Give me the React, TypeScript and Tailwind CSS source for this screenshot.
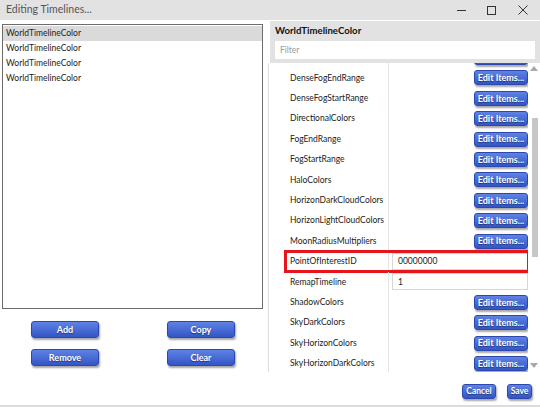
import React from 'react';

type Prop = { name: string; value?: string };

const props: Prop[] = [
  { name: 'DenseFogColors' },
  { name: 'DenseFogEndRange' },
  { name: 'DenseFogStartRange' },
  { name: 'DirectionalColors' },
  { name: 'FogEndRange' },
  { name: 'FogStartRange' },
  { name: 'HaloColors' },
  { name: 'HorizonDarkCloudColors' },
  { name: 'HorizonLightCloudColors' },
  { name: 'MoonRadiusMultipliers' },
  { name: 'PointOfInterestID', value: '00000000' },
  { name: 'RemapTimeline', value: '1' },
  { name: 'ShadowColors' },
  { name: 'SkyDarkColors' },
  { name: 'SkyHorizonColors' },
  { name: 'SkyHorizonDarkColors' },
  { name: 'SkyLightColors' },
];

const font = { fontFamily: 'Lato, "Noto Sans", sans-serif' };

function BlueButton({ children, className = '' }: { children: React.ReactNode; className?: string }) {
  return (
    <button
      className={`flex items-center justify-center whitespace-nowrap rounded-[3px] border border-[#2d48ac] bg-linear-to-b from-[#5f82e4] to-[#3455c6] font-bold text-white shadow-[1px_2px_2px_rgba(0,0,0,0.35)] [text-shadow:0_1px_1px_rgba(0,0,0,0.45)] ${className}`}
    >
      {children}
    </button>
  );
}

function PropRow({ prop }: { prop: Prop }) {
  const highlighted = prop.name === 'PointOfInterestID';
  return (
    <div className="relative flex h-[20.4px] shrink-0">
      <div className="flex w-[119px] items-center whitespace-nowrap pl-[21px] text-[8.5px] text-[#222]">{prop.name}</div>
      <div className="flex flex-1 items-center justify-end border-l border-[#e4e4e4] pl-[3px]">
        {prop.value !== undefined ? (
          <div className="flex h-[17px] w-full items-center border border-[#d6d6d6] bg-white pl-[5px] text-[8.5px] text-[#222]">
            {prop.value}
          </div>
        ) : (
          <BlueButton className="h-[15px] w-[54px] text-[9px]">Edit Items...</BlueButton>
        )}
      </div>
      {highlighted && (
        <div className="pointer-events-none absolute -top-[1px] -bottom-[1px] left-[15px] -right-[2px] border-[3px] border-[#e8141b]" />
      )}
    </div>
  );
}

export default function App() {
  return (
    <div className="flex h-[407px] w-[540px] flex-col overflow-hidden bg-white" style={font}>
      {/* title bar */}
      <div className="flex h-[20px] shrink-0 items-center bg-[#e2e2e2] pl-[6px]">
        <span className="text-[10.5px] text-[#555]">Editing Timelines...</span>
        <div className="ml-auto flex h-full items-center">
          <div className="flex w-[30px] justify-center">
            <div className="h-[1px] w-[9px] bg-[#333]" />
          </div>
          <div className="flex w-[30px] justify-center">
            <div className="h-[9px] w-[9px] border border-[#333]" />
          </div>
          <div className="flex w-[34px] justify-center">
            <svg width="10" height="10" viewBox="0 0 10 10">
              <path d="M0.5 0.5 L9.5 9.5 M9.5 0.5 L0.5 9.5" stroke="#333" strokeWidth="1" />
            </svg>
          </div>
        </div>
      </div>

      <div className="flex flex-1">
        {/* left panel */}
        <div className="flex w-[268px] shrink-0 flex-col">
          <div className="ml-[2px] mt-[4px] h-[285px] w-[261px] border border-[#6b6b6b] pt-[1px] text-[8.5px] text-[#222]">
            <div className="flex h-[15px] items-center bg-[#dadada] pl-[3px]">WorldTimelineColor</div>
            <div className="flex h-[15px] items-center pl-[3px]">WorldTimelineColor</div>
            <div className="flex h-[15px] items-center pl-[3px]">WorldTimelineColor</div>
            <div className="flex h-[15px] items-center pl-[3px]">WorldTimelineColor</div>
          </div>
          <div className="mt-[12px] grid grid-cols-[68px_68px] gap-x-[68px] gap-y-[11px] pl-[31px]">
            <BlueButton className="h-[17px] text-[9px]">Add</BlueButton>
            <BlueButton className="h-[17px] text-[9px]">Copy</BlueButton>
            <BlueButton className="h-[17px] text-[9px]">Remove</BlueButton>
            <BlueButton className="h-[17px] text-[9px]">Clear</BlueButton>
          </div>
        </div>

        {/* right panel */}
        <div className="flex flex-1 flex-col">
          <div className="ml-[2px] mt-[1px] flex h-[42px] shrink-0 flex-col bg-[#e2e2e2] px-[5px]">
            <div className="flex h-[20px] items-center text-[9.6px] font-bold text-[#111]">WorldTimelineColor</div>
            <div className="flex h-[18px] items-center bg-white pl-[5px] text-[8.5px] text-[#9a9a9a]">Filter</div>
          </div>
          <div className="flex h-[309px] shrink-0 border-l border-[#dedede]">
            <div className="flex-1 overflow-hidden">
              <div className="-mt-[15.6px] flex flex-col">
                {props.map((p) => (
                  <PropRow key={p.name} prop={p} />
                ))}
              </div>
            </div>
            {/* scrollbar */}
            <div className="flex w-[12px] flex-col items-center pt-[3px]">
              <svg width="8" height="5" viewBox="0 0 8 5">
                <path d="M0 5 L4 0 L8 5 Z" fill="#a8a8a8" />
              </svg>
              <div className="ml-[2px] mt-[47px] h-[139px] w-[6px] bg-[#c6c6c6]" />
              <div className="flex-1" />
              <svg width="8" height="5" viewBox="0 0 8 5" className="mb-[4px]">
                <path d="M0 0 L4 5 L8 0 Z" fill="#a8a8a8" />
              </svg>
            </div>
          </div>
          <div className="flex justify-end gap-[11px] pr-[8px] pt-[12px]">
            <BlueButton className="h-[15px] w-[34px] text-[8.5px]">Cancel</BlueButton>
            <BlueButton className="h-[15px] w-[25px] text-[8.5px]">Save</BlueButton>
          </div>
        </div>
      </div>
      <div className="h-[2px] shrink-0 bg-[#dcdcdc]" />
    </div>
  );
}
